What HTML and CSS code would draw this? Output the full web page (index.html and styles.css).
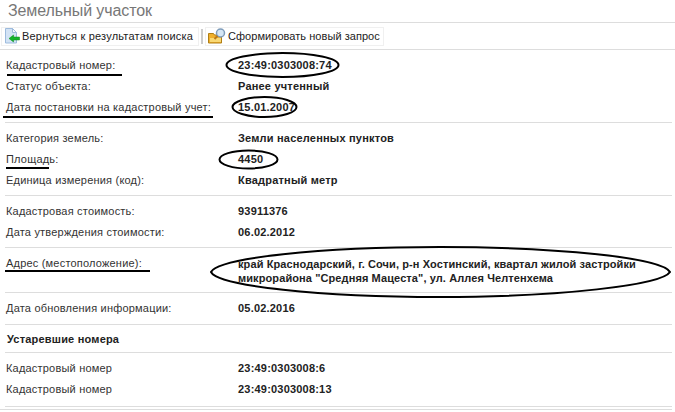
FILE: index.html
```html
<!DOCTYPE html>
<html lang="ru">
<head>
    <meta charset="UTF-8">
    <meta name="viewport" content="width=device-width, initial-scale=1.0">
    <title>Земельный участок</title>
    <link rel="stylesheet" href="styles.css">
</head>
<body>
    <div class="page">
        <h1>Земельный участок</h1>

        <div class="toolbar">
            <a class="tool tool-back">
                <svg class="icon" width="15" height="16" viewBox="0 0 15 16">
                    <path d="M.5 .5h7l4 4v10.500h-11z" fill="#d3e3f5" stroke="#9dbbdd"/>
                    <path d="M7.500 .5v4h4z" fill="#f4f8fd" stroke="#9dbbdd"/>
                    <path d="M4 10.500l4.500-3.500v2h6v3h-6v2z" fill="#14b52c" stroke="#0b8a1e" stroke-width=".5"/>
                </svg>
                Вернуться к результатам поиска
            </a>
            <span class="tool-sep"></span>
            <a class="tool tool-new">
                <svg class="icon" width="18" height="16" viewBox="0 0 18 16">
                    <path d="M.5 5.500h5l1 1.500h7v8h-13z" fill="#f0b02c" stroke="#b07f16"/>
                    <path d="M2 10h11v4h-11z" fill="#f9d873"/>
                    <circle cx="12.500" cy="5" r="4" fill="#d5e6f5" stroke="#7e9cba" stroke-width="1.500"/>
                    <path d="M9.500 8l-3 3" stroke="#b9791a" stroke-width="2"/>
                </svg>
                Сформировать новый запрос
            </a>
        </div>

        <div class="group">
            <div class="row"><span class="label">Кадастровый номер:</span><span class="value">23:49:0303008:74</span></div>
            <div class="row"><span class="label">Статус объекта:</span><span class="value">Ранее учтенный</span></div>
            <div class="row"><span class="label">Дата постановки на кадастровый учет:</span><span class="value">15.01.2007</span></div>
        </div>

        <div class="group">
            <div class="row"><span class="label">Категория земель:</span><span class="value">Земли населенных пунктов</span></div>
            <div class="row"><span class="label">Площадь:</span><span class="value">4450</span></div>
            <div class="row"><span class="label">Единица измерения (код):</span><span class="value">Квадратный метр</span></div>
        </div>

        <div class="group">
            <div class="row"><span class="label">Кадастровая стоимость:</span><span class="value">93911376</span></div>
            <div class="row"><span class="label">Дата утверждения стоимости:</span><span class="value">06.02.2012</span></div>
        </div>

        <div class="group group-address">
            <div class="row"><span class="label">Адрес (местоположение):</span><span class="value">край Краснодарский, г. Сочи, р-н Хостинский, квартал жилой застройки<br>микрорайона "Средняя Мацеста", ул. Аллея Челтенхема</span></div>
        </div>

        <div class="group group-date">
            <div class="row"><span class="label">Дата обновления информации:</span><span class="value">05.02.2016</span></div>
        </div>

        <div class="group group-head">
            <h2>Устаревшие номера</h2>
        </div>

        <div class="group group-last">
            <div class="row"><span class="label">Кадастровый номер</span><span class="value">23:49:0303008:6</span></div>
            <div class="row"><span class="label">Кадастровый номер</span><span class="value">23:49:0303008:13</span></div>
        </div>
        <div class="bottom-line"></div>

        <!-- пометки от руки поверх страницы -->
        <svg class="ink" width="675" height="412" viewBox="0 0 675 412">
            <g fill="none" stroke="#000" stroke-width="2">
                <path d="M7 75H122"/>
                <path d="M3 117H213"/>
                <path d="M6 168H49"/>
                <path d="M5 271H150"/>
                <ellipse cx="282.500" cy="65" rx="56" ry="12"/>
                <ellipse cx="264.500" cy="107" rx="32" ry="10"/>
                <ellipse cx="248.500" cy="159.500" rx="29" ry="9"/>
                <path d="M211 272C218 258 320 247 440 247C560 247 662 258 670 272C662 285 560 297 440 297C320 297 218 286 211 272Z"/>
            </g>
        </svg>
    </div>
</body>
</html>
```

FILE: styles.css
```css
* {
    box-sizing: border-box;
}

body {
    margin: 0;
    background-color: #fff;
    font-family: "Liberation Sans", Arial, sans-serif;
    font-size: 11px;
    letter-spacing: .2px;
    color: #333;
    overflow: hidden;
}

.page {
    position: relative;
    width: 675px;
    height: 412px;
}

h1 {
    margin: 0;
    height: 23px;
    padding-left: 8px;
    border-bottom: 1px solid #ddd;
    font-size: 16px;
    font-weight: normal;
    letter-spacing: -.1px;
    line-height: 22px;
    color: #777;
}

.toolbar {
    display: flex;
    align-items: center;
    gap: 2px;
    height: 27px;
    padding-left: 1px;
    border-bottom: 1px solid #ddd;
}

.tool {
    display: flex;
    align-items: center;
    gap: 2px;
    height: 19px;
    padding-left: 3px;
    border: 1px solid #f0f0f0;
    color: #222;
    white-space: nowrap;
}

.tool-back {
    width: 198px;
}

.tool-new {
    width: 179px;
    padding-left: 2px;
    letter-spacing: .05px;
}

.tool-sep {
    width: 2px;
    height: 15px;
    background-color: #ccc;
}

.group {
    margin-left: 5px;
    margin-right: 3px;
    padding: 5px 0 4px 1px;
    border-bottom: 1px solid #ddd;
}

.row {
    display: flex;
    min-height: 21px;
    line-height: 21px;
}

.label {
    width: 232px;
    flex-shrink: 0;
}

.value {
    font-weight: bold;
    color: #222;
}

.group-address .value {
    line-height: 14px;
    padding-top: 4px;
    letter-spacing: .1px;
}

.group-address .row {
    min-height: 35px;
}

.group-date {
    padding-bottom: 5px;
}

.group-head {
    height: 28px;
    padding: 1px 0 0 2px;
}

.group-last {
    padding-bottom: 6px;
}

.bottom-line {
    height: 1px;
    margin: 2px 3px 0 0;
    background-color: #ddd;
}

h2 {
    margin: 0;
    font-size: 11px;
    line-height: 27px;
    color: #222;
}

.ink {
    position: absolute;
    top: 0;
    left: 0;
}
```
